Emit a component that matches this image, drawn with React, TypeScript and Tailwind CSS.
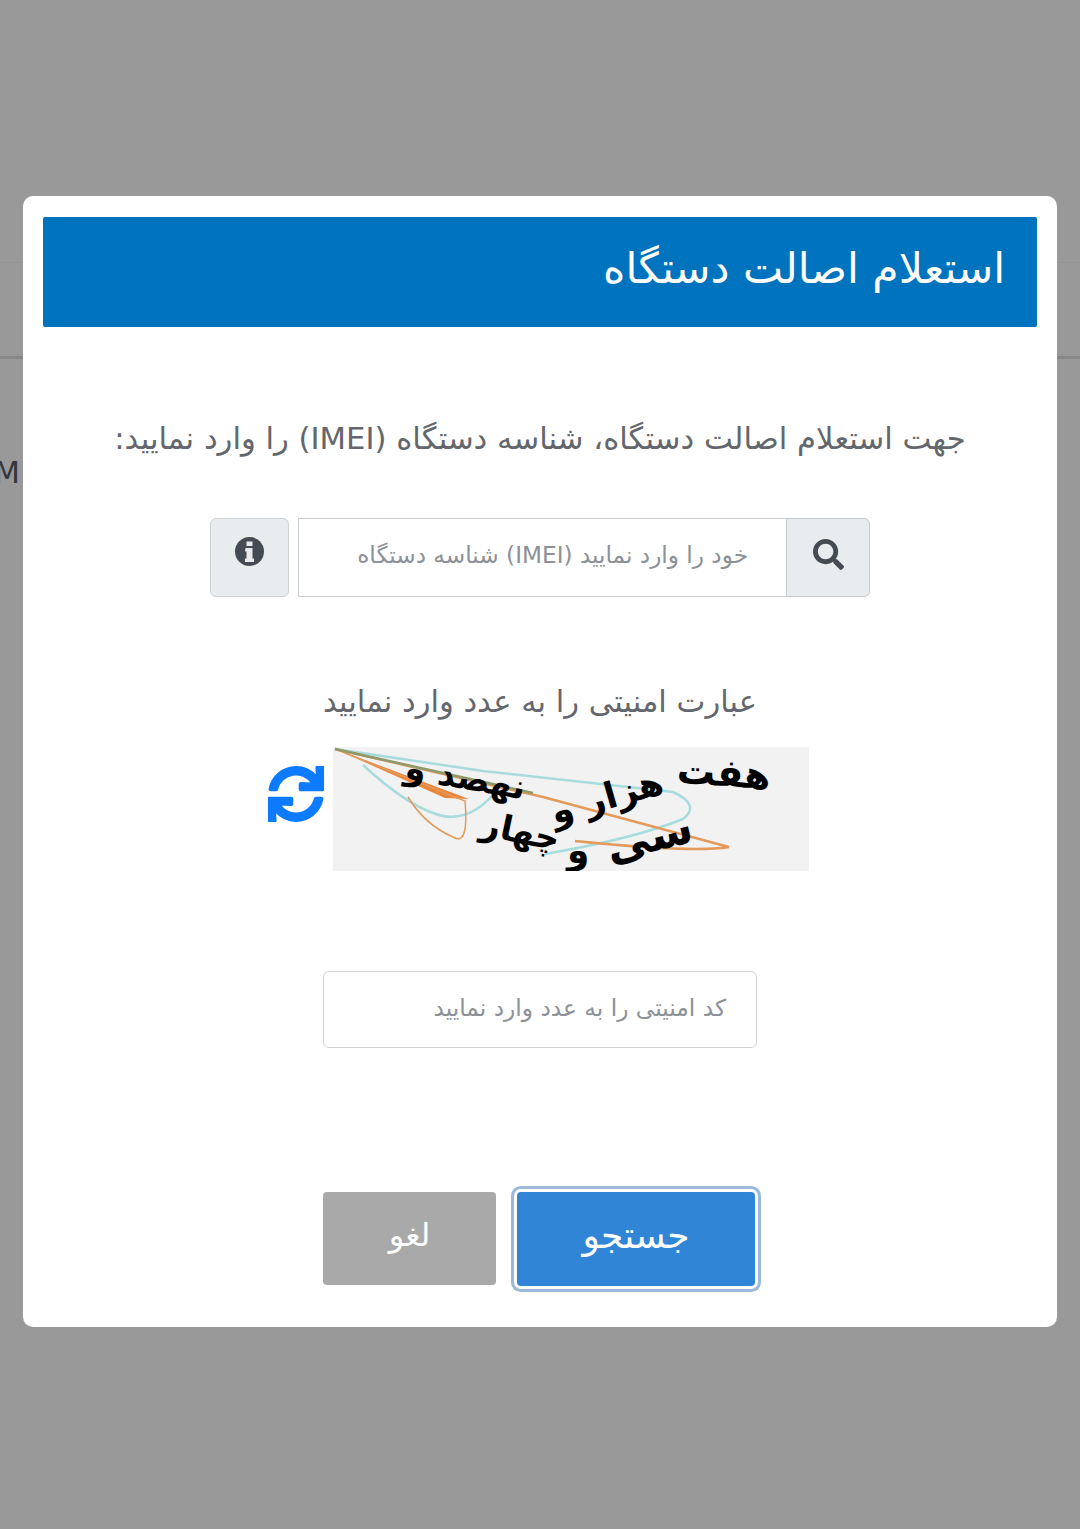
import { FaSearch, FaSync } from "react-icons/fa";

const fa = { fontFamily: '"DejaVu Sans", "Noto Sans", sans-serif' };

function InfoIcon() {
  return (
    <svg width="29" height="29" viewBox="0 0 29 29">
      <circle cx="14.5" cy="14.5" r="14.5" fill="#454b52" />
      <path d="M11.5 4.5h6v4.5h-6z M10.5 11h7v10.5h1.5v3.5h-9v-3.5h1.5v-7h-1.5z" fill="#e9ecef" />
    </svg>
  );
}

function Captcha() {
  return (
    <div className="relative w-[476px] h-[124px] bg-[#f2f2f2] overflow-hidden">
      <svg className="absolute inset-0" width="476" height="124" viewBox="0 0 476 124" fill="none">
        <path d="M2 2 L150 24 L340 45 Q368 58 350 72 Q300 92 212 107" stroke="#a8dcdc" strokeWidth="2.5" />
        <path d="M30 18 Q70 55 100 66 Q135 80 165 42" stroke="#a8dcdc" strokeWidth="2.5" />
        <path d="M0 1 L136 52 L112 51 Z" fill="#e8863c" />
        <path d="M2 2 L210 50 L396 100 Q360 106 242 94" stroke="#e39a5a" strokeWidth="2.5" />
        <path d="M2 2 L132 54 Q136 100 120 90 Q92 78 75 50" stroke="#e39a5a" strokeWidth="1.5" />
        <path d="M2 2 L200 46" stroke="#8f9a6a" strokeWidth="2.5" />
      </svg>
      <span dir="rtl" className="absolute left-[344px] top-[4px] text-[38px] font-bold text-black leading-[44px] rotate-[4deg]" style={fa}>هفت</span>
      <span dir="rtl" className="absolute left-[216px] top-[28px] text-[36px] font-bold text-black leading-[44px] rotate-[-16deg]" style={fa}>هزار و</span>
      <span dir="rtl" className="absolute left-[72px] top-[8px] text-[34px] font-bold text-black leading-[44px] rotate-[10deg]" style={fa}>نهصد و</span>
      <span dir="rtl" className="absolute left-[272px] top-[68px] text-[44px] font-bold text-black leading-[44px] rotate-[-14deg]" style={fa}>سی</span>
      <span dir="rtl" className="absolute left-[148px] top-[62px] text-[34px] font-bold text-black leading-[44px] rotate-[12deg]" style={fa}>چهار</span>
      <span dir="rtl" className="absolute left-[234px] top-[82px] text-[36px] font-bold text-black leading-[44px]" style={fa}>و</span>
    </div>
  );
}

export default function App() {
  return (
    <div dir="rtl" className="relative w-[1080px] h-[1529px] overflow-hidden bg-[#999999] pt-[196px]" style={fa}>
      {/* page behind the overlay */}
      <div className="absolute left-0 right-0 top-[262px] h-px bg-[#939393]" />
      <div className="absolute left-0 right-0 top-[356px] h-[3px] bg-[#878787]" />
      <span dir="ltr" className="absolute left-[-6px] top-[456px] text-[30px] leading-[34px] text-[#33363c]">M</span>

      <div className="relative mx-[23px] h-[1131px] rounded-[10px] bg-white px-[20px] pt-[21px]">
        <div className="h-[110px] rounded-[2px] bg-[#0073bf] pr-[32px] pb-[7px] flex items-center">
          <h1 className="text-[42.6px] leading-none text-white font-normal">استعلام اصالت دستگاه</h1>
        </div>

        <p className="mt-[92px] text-center text-[30.7px] leading-[40px] text-[#63676d]">
          جهت استعلام اصالت دستگاه، شناسه دستگاه (IMEI) را وارد نمایید:
        </p>

        <div className="mt-[59px] flex justify-center">
          <div className="flex h-[79px] w-[660px]">
            <div className="flex w-[84px] items-center justify-center rounded-r-[6px] border border-[#c4c7cb] bg-[#e9ecef] pb-[6px] text-[#454b52]">
              <FaSearch size={31} />
            </div>
            <div className="flex flex-1 items-center border-y border-l border-[#c9ccd0] bg-white pb-[5px] pr-[38px] text-[23.2px] text-[#8c9197]">
              خود را وارد نمایید (IMEI) شناسه دستگاه
            </div>
            <div className="mr-[9px] flex w-[79px] items-start justify-center rounded-[6px] border border-[#cfd2d5] bg-[#e9ecef] pt-[18px]">
              <InfoIcon />
            </div>
          </div>
        </div>

        <p className="mt-[85px] text-center text-[30.6px] leading-[40px] text-[#63676d]">
          عبارت امنیتی را به عدد وارد نمایید
        </p>

        <div dir="ltr" className="mt-[25px] flex items-start pl-[225px]">
          <FaSync size={56} stroke="currentColor" strokeWidth={14} className="mt-[19px] text-[#0d7bff]" />
          <div className="ml-[9px]">
            <Captcha />
          </div>
        </div>

        <div className="mx-auto mt-[100px] flex h-[77px] w-[434px] items-center rounded-[6px] border border-[#cfd2d5] bg-white pb-[2px] pr-[30px] text-[23.3px] text-[#8c9197]">
          کد امنیتی را به عدد وارد نمایید
        </div>

        <div dir="ltr" className="mt-[144px] flex justify-center gap-[21px] pr-[2px]">
          <button className="h-[93px] w-[173px] rounded-[4px] bg-[#a9a9a9] pb-[7px] text-[32px] text-white">لغو</button>
          <button className="h-[94px] w-[238px] rounded-[4px] bg-[#3085d6] pb-[7px] text-[36px] text-white shadow-[0_0_0_3px_#ffffff,0_0_0_6px_#9cb9d9]">جستجو</button>
        </div>
      </div>
    </div>
  );
}
